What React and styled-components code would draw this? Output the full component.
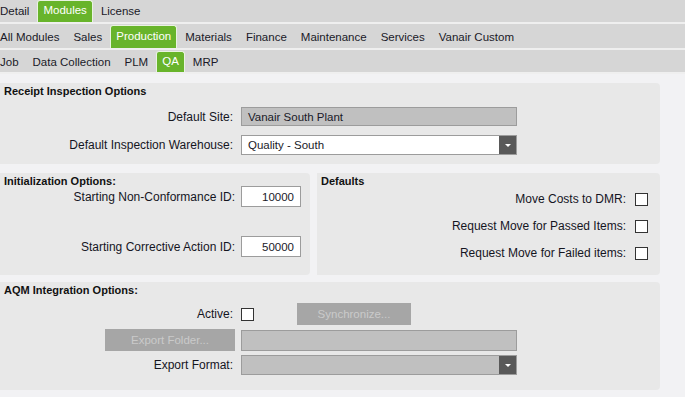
import React from "react";
import styled, { createGlobalStyle } from "styled-components";

const Global = createGlobalStyle`
  html, body { margin: 0; padding: 0; background: #f2f2f4; }
  body { font-family: "Liberation Sans", Arial, sans-serif; color: #15151f; }
  * { box-sizing: border-box; }
`;

const Page = styled.div`
  width: 685px;
  height: 397px;
  overflow: hidden;
  background: #f2f2f4;
  display: flex;
  flex-direction: column;
`;

const TabRow = styled.div`
  height: ${(p) => p.$h}px;
  background: #d6d6d6;
  display: flex;
  align-items: stretch;
  gap: 2px;
  margin-left: -6px;
  padding-top: ${(p) => p.$top || 0}px;
  border-bottom: 2px solid #efefef;
  font-size: 11.5px;
  flex-shrink: 0;
`;

const Tab = styled.div`
  display: flex;
  align-items: ${(p) => (p.$active ? "flex-start" : "center")};
  padding: ${(p) => (p.$active ? "0 5px" : "0 6px")};
  color: ${(p) => (p.$active ? "#ffffff" : "#1a1a28")};
  background: ${(p) => (p.$active ? "#68b42b" : "transparent")};
  border: ${(p) => (p.$active ? "1px solid #e9f3e1" : "none")};
  border-bottom: none;
  border-radius: ${(p) => (p.$active ? "3px 3px 0 0" : "0")};
  white-space: nowrap;
  padding-top: ${(p) => (p.$active ? p.$pt : 0)}px;
`;

const Content = styled.div`
  width: 660px;
  padding-top: 9px;
  display: flex;
  flex-direction: column;
`;

const Panel = styled.div`
  background: #e8e8e8;
  border-radius: 0 4px 4px 0;
  height: ${(p) => p.$h}px;
  padding: 1px 0 0 4px;
  display: flex;
  flex-direction: column;
`;

const PanelRow = styled.div`
  display: grid;
  grid-template-columns: ${(p) => p.$cols || "310px 343px"};
  column-gap: 7px;
  margin-top: ${(p) => p.$mt}px;
`;

const Title = styled.div`
  font-size: 11px;
  font-weight: bold;
  color: #111;
  line-height: 14px;
`;

const FormGrid = styled.div`
  display: grid;
  grid-template-columns: 229px ${(p) => p.$field}px;
  column-gap: 8px;
  row-gap: ${(p) => p.$rowGap}px;
  margin-top: ${(p) => p.$mt}px;
  align-items: center;
`;

const Label = styled.div`
  font-size: 12px;
  text-align: right;
  white-space: nowrap;
  color: #15151f;
  margin-right: ${(p) => p.$mr || 0}px;
`;

const TextBox = styled.div`
  height: ${(p) => p.$h || 20}px;
  border: 1px solid #9c9c9c;
  background: ${(p) => (p.$disabled ? "#c0c0c0" : "#ffffff")};
  font-size: 11.5px;
  display: flex;
  align-items: center;
  justify-content: ${(p) => (p.$right ? "flex-end" : "flex-start")};
  padding: 0 6px;
  color: #1a1a28;
`;

const SelectBox = styled.div`
  height: 20px;
  border: 1px solid #9c9c9c;
  background: ${(p) => (p.$disabled ? "#c0c0c0" : "#ffffff")};
  display: flex;
  align-items: stretch;
  font-size: 11.5px;
  color: #1a1a28;
`;

const SelectText = styled.div`
  flex: 1;
  display: flex;
  align-items: center;
  padding-left: 6px;
`;

const Arrow = styled.div`
  width: 17px;
  background: #595959;
  display: flex;
  align-items: center;
  justify-content: center;
  &::after {
    content: "";
    border-left: 3px solid transparent;
    border-right: 3px solid transparent;
    border-top: 3px solid #ffffff;
    margin-top: 1px;
  }
`;

const CheckRows = styled.div`
  display: flex;
  flex-direction: column;
  gap: 13px;
  margin-top: 4px;
  align-items: flex-end;
  padding-right: 12px;
`;

const CheckRow = styled.div`
  display: flex;
  align-items: center;
  gap: 9px;
`;

const Check = styled.div`
  width: 13px;
  height: 13px;
  border: 1px solid #333;
  background: #ffffff;
  flex-shrink: 0;
`;

const Button = styled.div`
  height: 22px;
  width: ${(p) => p.$w}px;
  background: #a6a6a6;
  color: #cacaca;
  font-size: 11.5px;
  display: flex;
  align-items: center;
  justify-content: center;
  margin-left: ${(p) => p.$ml || 0}px;
  margin-right: ${(p) => p.$mr || 0}px;
  justify-self: end;
`;

const Inline = styled.div`
  display: flex;
  align-items: center;
`;

export default function App() {
  return (
    <Page>
      <Global />
      <TabRow $h={24}>
        <Tab>Detail</Tab>
        <Tab $active $pt={3}>Modules</Tab>
        <Tab>License</Tab>
      </TabRow>
      <TabRow $h={26} $top={1}>
        <Tab>All Modules</Tab>
        <Tab>Sales</Tab>
        <Tab $active $pt={4}>Production</Tab>
        <Tab>Materials</Tab>
        <Tab>Finance</Tab>
        <Tab>Maintenance</Tab>
        <Tab>Services</Tab>
        <Tab>Vanair Custom</Tab>
      </TabRow>
      <TabRow $h={24} $top={1}>
        <Tab>Job</Tab>
        <Tab>Data Collection</Tab>
        <Tab>PLM</Tab>
        <Tab $active $pt={3}>QA</Tab>
        <Tab>MRP</Tab>
      </TabRow>

      <Content>
        <Panel $h={81}>
          <Title>Receipt Inspection Options</Title>
          <FormGrid $field={276} $rowGap={9} $mt={9}>
            <Label>Default Site:</Label>
            <TextBox $disabled $h={19}>Vanair South Plant</TextBox>
            <Label>Default Inspection Warehouse:</Label>
            <SelectBox>
              <SelectText>Quality - South</SelectText>
              <Arrow />
            </SelectBox>
          </FormGrid>
        </Panel>

        <PanelRow $mt={9}>
          <Panel $h={102}>
            <Title>Initialization Options:</Title>
            <FormGrid $field={60} $rowGap={29} $mt={-2}>
              <Label $mr={-2}>Starting Non-Conformance ID:</Label>
              <TextBox $right $h={21}>10000</TextBox>
              <Label $mr={-2}>Starting Corrective Action ID:</Label>
              <TextBox $right $h={21}>50000</TextBox>
            </FormGrid>
          </Panel>
          <Panel $h={102}>
            <Title>Defaults</Title>
            <CheckRows>
              <CheckRow>
                <Label>Move Costs to DMR:</Label>
                <Check />
              </CheckRow>
              <CheckRow>
                <Label>Request Move for Passed Items:</Label>
                <Check />
              </CheckRow>
              <CheckRow>
                <Label>Request Move for Failed items:</Label>
                <Check />
              </CheckRow>
            </CheckRows>
          </Panel>
        </PanelRow>

        <PanelRow $mt={7} $cols="660px">
          <Panel $h={108}>
            <Title>AQM Integration Options:</Title>
            <FormGrid $field={276} $rowGap={4} $mt={6}>
              <Label>Active:</Label>
              <Inline>
                <Check />
                <Button $w={114} $ml={43}>Synchronize...</Button>
              </Inline>
              <Button $w={130} $mr={-2}>Export Folder...</Button>
              <TextBox $disabled $h={21} />
              <Label>Export Format:</Label>
              <SelectBox $disabled>
                <SelectText />
                <Arrow />
              </SelectBox>
            </FormGrid>
          </Panel>
        </PanelRow>
      </Content>
    </Page>
  );
}
